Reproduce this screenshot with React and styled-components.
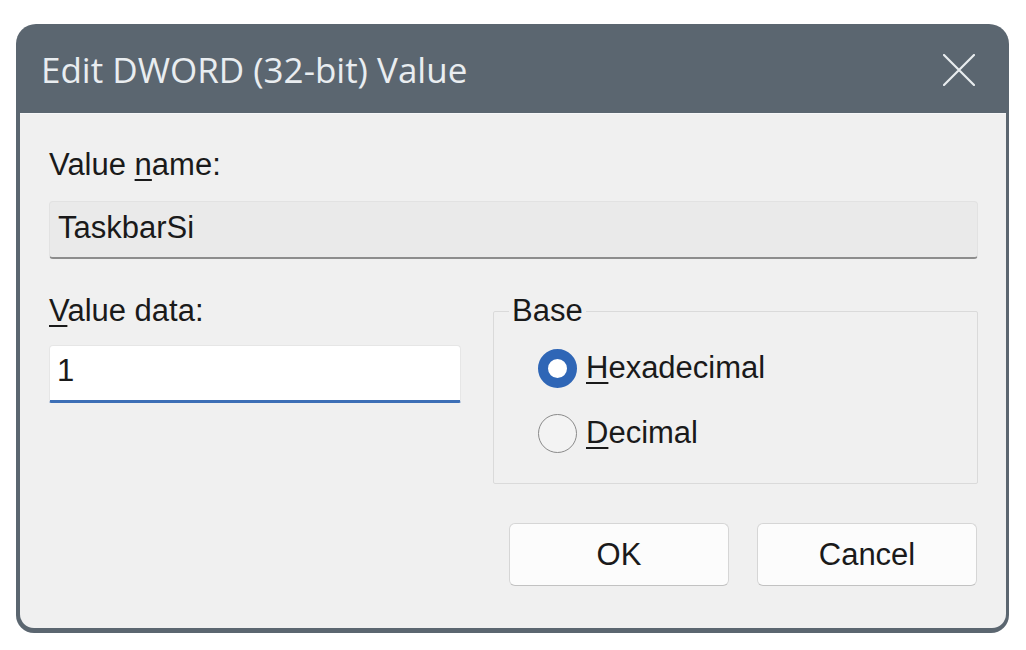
import React from "react";
import styled, { createGlobalStyle } from "styled-components";

const GlobalStyle = createGlobalStyle`
  html, body { margin: 0; padding: 0; background: #ffffff; }
  body { font-family: "Liberation Sans", Arial, sans-serif; }
  * { box-sizing: border-box; }
`;

const Page = styled.div`
  width: 1026px;
  height: 650px;
  padding: 24px 0 0 16px;
`;

const Window = styled.div`
  width: 993px;
  height: 609px;
  background: #5b6670;
  border-radius: 20px 20px 18px 18px;
  padding: 0 3px 5px 4px;
  display: flex;
  flex-direction: column;
`;

const TitleBar = styled.div`
  height: 89px;
  flex: none;
  display: flex;
  align-items: center;
  justify-content: space-between;
  padding: 0 33px 0 25px;
  margin-left: -4px;
  margin-right: -3px;
`;

const Title = styled.div`
  font-family: "Open Sans", "Noto Sans", sans-serif;
  font-size: 35px;
  color: #e9edf0;
  padding-top: 2px;
`;

const CloseButton = styled.button`
  width: 34px;
  height: 34px;
  border: none;
  background: transparent;
  padding: 0;
  display: flex;
  align-items: center;
  justify-content: center;
  margin-top: 2px;
`;

const Body = styled.div`
  flex: 1;
  background: #f0f0f0;
  border-top: 1px solid #f6f7f8;
  border-radius: 0 0 14px 14px;
  padding: 33px 28px 0 29px;
  display: flex;
  flex-direction: column;
`;

const Label = styled.div`
  font-size: 31px;
  line-height: 36px;
  color: #1a1a1a;
  & u { text-underline-offset: 4px; text-decoration-thickness: 2px; }
`;

const NameField = styled.div`
  margin-top: 18px;
  height: 58px;
  background: #eaeaea;
  border: 1px solid #e2e2e2;
  border-bottom: 2px solid #8d8d8d;
  border-radius: 4px;
  padding: 8px 0 0 8px;
  font-size: 31px;
  line-height: 36px;
  color: #1a1a1a;
`;

const Columns = styled.div`
  margin-top: 34px;
  display: grid;
  grid-template-columns: 412px 1fr;
  column-gap: 32px;
  align-items: start;
`;

const DataColumn = styled.div`
  display: flex;
  flex-direction: column;
`;

const DataInput = styled.div`
  margin-top: 16px;
  height: 58px;
  background: #ffffff;
  border: 1px solid #e6e6e6;
  border-bottom: 3px solid #3d6fb6;
  border-radius: 4px 4px 2px 2px;
  padding: 7px 0 0 7px;
  font-size: 31px;
  line-height: 36px;
  color: #1a1a1a;
`;

const Group = styled.fieldset`
  margin: 0;
  border: 1px solid #dadada;
  border-radius: 2px;
  padding: 0;
`;

const Legend = styled.legend`
  margin-left: 15px;
  padding: 0 3px;
  font-size: 31px;
  line-height: 36px;
  color: #1a1a1a;
`;

const RadioList = styled.div`
  padding: 19px 0 30px 44px;
  display: flex;
  flex-direction: column;
  gap: 25px;
`;

const RadioRow = styled.label`
  display: flex;
  align-items: center;
  gap: 9px;
  height: 40px;
  font-size: 31px;
  line-height: 36px;
  color: #1a1a1a;
  & u { text-underline-offset: 4px; text-decoration-thickness: 2px; }
`;

const RadioCircle = styled.span`
  width: 39px;
  height: 39px;
  border-radius: 50%;
  flex: none;
  border: ${(p) => (p.$checked ? "10px solid #2f66b6" : "1.5px solid #8a8a8a")};
  background: ${(p) => (p.$checked ? "#ffffff" : "#f3f3f3")};
`;

const ButtonRow = styled.div`
  margin-top: 39px;
  display: flex;
  justify-content: flex-end;
  gap: 28px;
  padding-right: 1px;
`;

const Button = styled.button`
  width: 220px;
  height: 63px;
  background: #fcfcfc;
  border: 1px solid #d6d6d6;
  border-bottom-color: #c2c2c2;
  border-radius: 6px;
  font-family: "Liberation Sans", Arial, sans-serif;
  font-size: 31px;
  color: #1a1a1a;
  padding: 0;
`;

export default function App() {
  return (
    <>
      <GlobalStyle />
      <Page>
        <Window>
          <TitleBar>
            <Title>Edit DWORD (32-bit) Value</Title>
            <CloseButton aria-label="Close">
              <svg width="32" height="32" viewBox="0 0 32 32">
                <path d="M1 1 L31 31 M31 1 L1 31" stroke="#e8ecef" strokeWidth="2.2" strokeLinecap="round" fill="none" />
              </svg>
            </CloseButton>
          </TitleBar>
          <Body>
            <Label>Value <u>n</u>ame:</Label>
            <NameField>TaskbarSi</NameField>
            <Columns>
              <DataColumn>
                <Label><u>V</u>alue data:</Label>
                <DataInput>1</DataInput>
              </DataColumn>
              <Group>
                <Legend>Base</Legend>
                <RadioList>
                  <RadioRow>
                    <RadioCircle $checked />
                    <span><u>H</u>exadecimal</span>
                  </RadioRow>
                  <RadioRow>
                    <RadioCircle />
                    <span><u>D</u>ecimal</span>
                  </RadioRow>
                </RadioList>
              </Group>
            </Columns>
            <ButtonRow>
              <Button>OK</Button>
              <Button>Cancel</Button>
            </ButtonRow>
          </Body>
        </Window>
      </Page>
    </>
  );
}
